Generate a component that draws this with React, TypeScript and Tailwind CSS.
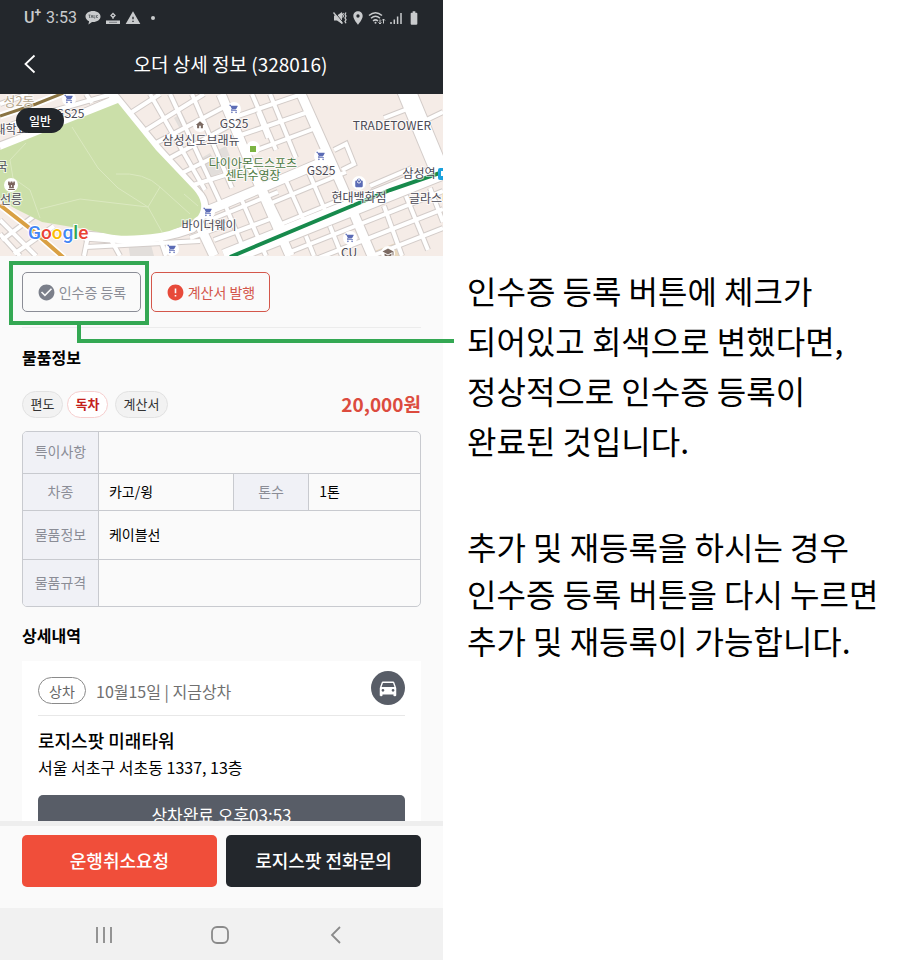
import React from 'react';
import {
  MdBatteryFull,
  MdCheckCircle,
  MdDirectionsCar,
  MdError,
  MdHome,
  MdLocalMall,
  MdLocationOn,
  MdSchool,
  MdShoppingCart,
  MdWarning,
} from 'react-icons/md';
import { FaChessRook } from 'react-icons/fa';

const CARTS = [
  { x: 69, y: 99 },
  { x: 234, y: 109 },
  { x: 321, y: 156 },
  { x: 208, y: 212 },
  { x: 172, y: 249 },
  { x: 350, y: 238 },
];

const LABELS = [
  { x: 70, y: 118, text: 'GS25' },
  { x: 234, y: 128, text: 'GS25' },
  { x: 321, y: 175, text: 'GS25' },
  { x: 349, y: 257, text: 'CU' },
  { x: 392, y: 130, text: 'TRADETOWER' },
  { x: 201, y: 145, text: '삼성신도브래뉴' },
  { x: 359, y: 202, text: '현대백화점' },
  { x: 209, y: 230, text: '바이더웨이' },
  { x: 419, y: 178, text: '삼성역' },
  { x: 431, y: 203, text: '글라스타' },
  { x: 11, y: 134, text: '대학교' },
  { x: 2, y: 171, text: '국' },
  { x: 11, y: 204, text: '선릉' },
];

const NARROW_ROADS = [
  // north west
  'M0 129 L32 117 L112 94',
  'M0 104 L28 94',
  'M86 94 L92 103',
  // north, between the park and the first avenue
  'M132 112 L160 94',
  'M146 130 L204 94',
  'M156 143 L226 106',
  'M170 158 L236 122',
  'M182 173 L212 158',
  'M190 186 L254 166',
  'M150 94 L205 190',
  'M170 94 L220 202',
  'M192 94 L232 188',
  // centre
  'M232 118 L302 94',
  'M238 136 L308 112',
  'M246 154 L316 128',
  'M252 94 L276 150',
  'M270 94 L296 158',
  'M258 112 L268 138',
  // below the cross road
  'M205 222 L278 192',
  'M214 240 L270 219',
  'M190 238 L234 222',
  'M264 206 L346 172',
  'M274 227 L352 195',
  'M240 196 L266 256',
  'M262 184 L288 238',
  'M284 176 L308 230',
  'M306 166 L330 222',
  'M224 202 L244 250',
  // south west
  'M0 220 L36 256',
  'M0 234 L20 256',
  'M2 240 L42 210',
  'M14 254 L54 226',
  'M88 236 L84 256',
  'M86 247 L200 241',
  'M110 238 L120 256',
  'M160 238 L166 256',
  // south east
  'M290 252 L443 191',
  'M316 259 L443 209',
  'M372 256 L443 228',
  'M306 236 L314 256',
  'M330 226 L342 256',
  'M384 206 L402 256',
  'M406 196 L428 250',
  'M430 188 L443 222',
  // east
  'M334 150 L346 144 L354 164 L342 170',
  'M384 118 L410 108',
  'M370 186 L412 168',
  'M418 124 L443 112',
];

const WIDE_ROADS = [
  'M112 94 L158 150 L200 196 Q210 210 192 228 Q160 240 125 239 L84 236',
  'M0 147 L60 124 L118 99',
  'M204 212 L226 203 L332 158',
  'M221 94 L256 178 L290 256',
  'M301 94 L342 186 L372 256',
  'M198 222 L214 256',
];

const StatusBar: React.FC = () => {
  return (
    <div className="flex h-9 items-center justify-between pl-6 pr-[21px] text-[#c9cbcd]">
      <div className="flex items-center">
        <span className="font-['Roboto',sans-serif] text-base font-medium">
          U<sup className="text-xs font-bold">+</sup>
        </span>
        <span className="ml-[5px] font-['Roboto',sans-serif] text-base">3:53</span>
        <svg className="ml-2 h-4 w-4" viewBox="0 0 16 16" fill="currentColor">
          <path d="M8 1c-4.200 0-7.500 2.400-7.500 5.500 0 2.100 1.500 3.900 3.600 4.800L3.400 14.500l3.600-2.500H8c4.200 0 7.500-2.400 7.500-5.500S12.200 1 8 1z" />
          <path d="M3.500 5h2M4.500 5v3M6 8l1-3 1 3M9 5v3h1.200M11.300 5v3M12.800 5l-1.300 1.500 1.300 1.500" fill="none" stroke="#555a5e" strokeWidth="0.8" />
        </svg>
        <svg className="ml-1 h-4 w-4" viewBox="0 0 16 16" fill="none" stroke="currentColor">
          <rect x="1" y="10.500" width="14" height="3.500" fill="currentColor" stroke="none" />
          <path d="M4 12.300h8" stroke="#686c70" strokeWidth="0.8" />
          <path d="M8 3.500l2 2-2 2-2-2z" strokeWidth="1.300" />
          <path d="M8 7.500v1.500" />
        </svg>
        <MdWarning className="ml-1 h-4 w-4" />
        <span className="ml-[10px] h-1 w-1 rounded-full bg-[#c9cbcd]" />
      </div>
      <div className="flex items-center gap-[2px]">
        <svg className="h-4 w-4" viewBox="0 0 16 16" fill="none" stroke="currentColor" strokeWidth="1.300">
          <path d="M2 5.500h3L10 2v12l-5-3.500H2z" fill="currentColor" stroke="none" />
          <path d="M2.500 2l9 11" stroke="#23272c" strokeWidth="1" />
          <path d="M1.500 2.500l9 11" />
          <path d="M11.500 3l-1 1.500 1 1.500-1 1.500M14 2.500l-1 1.800 1 1.800-1 1.800 1 1.800-1 1.800 1 1.800" />
        </svg>
        <MdLocationOn className="h-4 w-4" />
        <svg className="h-4 w-[18px]" viewBox="0 0 18 16" fill="none" stroke="currentColor" strokeWidth="1.500">
          <path d="M1 5.500q6.500-5.500 13 0M3 8.300q4.500-4 9 0M5 11q2.500-2.200 5 0" />
          <circle cx="7.500" cy="12.800" r="1" fill="currentColor" stroke="none" />
          <path d="M12 9.500v4.500m-1.500-1.500l1.500 1.500 1.500-1.500M15.500 13.500V9m-1.500 1.500L15.500 9l1.500 1.500" strokeWidth="1" />
        </svg>
        <svg className="h-4 w-4" viewBox="0 0 16 16" stroke="currentColor" strokeWidth="1.500">
          <path d="M3 12v2M6.300 9.500V14M9.600 6.500V14M13 3v11" />
        </svg>
        <MdBatteryFull className="h-4 w-4" />
      </div>
    </div>
  );
};

const MapView: React.FC = () => {
  return (
    <div className="relative h-[162px] shrink-0 overflow-hidden">
      <svg
        className="h-full w-full font-['Noto_Sans_CJK_KR',sans-serif]"
        viewBox="0 94 443 162"
        preserveAspectRatio="xMidYMid slice"
      >
        <rect x="0" y="94" width="443" height="162" fill="#f5ece7" />
        <g fill="#e2dedb">
          <path d="M128 243 L150 241 L154 256 L130 256z" />
          <path d="M198 160 L210 153 L222 172 L210 178z" />
          <path d="M174 118 L182 113 L188 124 L180 129z" />
          <path d="M218 150 L226 146 L232 162 L224 166z" />
        </g>
        <path d="M372 252 L398 242 L404 256 L372 256z" fill="#ead9bd" />

        <g fill="none" stroke="#d3ccc9">
          {NARROW_ROADS.map((d) => (
            <path key={d} d={d} strokeWidth="6" />
          ))}
          {WIDE_ROADS.map((d) => (
            <path key={d} d={d} strokeWidth="11" />
          ))}
          <path d="M406 90 L440 172" strokeWidth="20" />
          <path d="M225 258 L450 168" strokeWidth="19" />
        </g>
        <g fill="none" stroke="#ffffff">
          {NARROW_ROADS.map((d) => (
            <path key={d} d={d} strokeWidth="4" />
          ))}
          {WIDE_ROADS.map((d) => (
            <path key={d} d={d} strokeWidth="9" />
          ))}
          <path d="M406 90 L440 172" strokeWidth="18" />
          <path d="M225 258 L450 168" strokeWidth="17" />
        </g>

        <path
          d="M0 150 L60 126 L118 103 L156 150 L194 190 Q206 204 198 216 Q180 230 160 233 Q125 238 108 234 L84 229 L42 222 L16 209 L0 200z"
          fill="#cbdfa9"
        />
        <g fill="none" stroke="#dbe9c0" strokeWidth="1">
          <path d="M72 127 L98 168 L118 188 L148 207 L162 232" />
          <path d="M26 143 L10 160 L13 178 L30 190 L40 218" />
          <path d="M40 209 L80 199 L148 207 L160 187" />
          <path d="M116 174 Q145 172 160 187 L190 214" />
          <path d="M184 194 L198 206" />
        </g>

        <path d="M0 205 L32 230 L64 258" fill="none" stroke="#ffffff" strokeWidth="7" />
        <path d="M0 205 L32 230 L64 258" fill="none" stroke="#d9a044" strokeWidth="4" />
        <path d="M0 116 L36 104 L66 92" fill="none" stroke="#ffffff" strokeWidth="7" />
        <path d="M0 116 L36 104 L66 92" fill="none" stroke="#8a7443" strokeWidth="3" />
        <path d="M230 257 L390 190 L443 172" fill="none" stroke="#178a4c" strokeWidth="4" />

        {CARTS.map(({ x, y }) => (
          <g key={`${x}-${y}`}>
            <circle cx={x} cy={y} r="7" fill="#ffffff" />
            <MdShoppingCart x={x - 5} y={y - 5} size={10} color="#5b6bb5" />
          </g>
        ))}
        <circle cx="200" cy="125" r="7" fill="#ffffff" />
        <MdHome x={195} y={120} size={10} color="#7b6a62" />
        <circle cx="11" cy="185" r="7" fill="#ffffff" />
        <FaChessRook x={7} y={181} size={9} color="#7a625c" />
        <circle cx="359" cy="183" r="7" fill="#ffffff" />
        <MdLocalMall x={354} y={178} size={10} color="#5b6bb5" />
        <circle cx="388" cy="253" r="7" fill="#ffffff" />
        <MdSchool x={382} y={247} size={12} color="#7b6a62" />
        <circle cx="253" cy="148" r="7" fill="#ffffff" />
        <rect x="250" y="146" width="6" height="6" fill="#7cb342" />
        <rect x="438" y="168" width="10" height="12" rx="2" fill="#1ba1dc" />
        <path d="M441 171h5v5h-5z" fill="#ffffff" />

        <g fontSize="12" textAnchor="middle" stroke="#ffffff" strokeOpacity="0.7" strokeWidth="2" paintOrder="stroke">
          <text x="19" y="106" fontSize="13" fill="#b5a68c">성2동</text>
          {LABELS.map(({ x, y, text }) => (
            <text key={`${x}-${y}`} x={x} y={y} fill="#4b4a55">{text}</text>
          ))}
          <text x="253" y="168" fill="#4d7a43">다이아몬드스포츠</text>
          <text x="253" y="180" fill="#4d7a43">센터수영장</text>
        </g>
        <text
          x="28"
          y="239"
          fontSize="19"
          fontWeight="500"
          stroke="#ffffff"
          strokeWidth="2"
          paintOrder="stroke"
          className="font-['Roboto',sans-serif]"
        >
          <tspan fill="#4285f4">G</tspan>
          <tspan fill="#ea4335">o</tspan>
          <tspan fill="#fbbc05">o</tspan>
          <tspan fill="#4285f4">g</tspan>
          <tspan fill="#34a853">l</tspan>
          <tspan fill="#ea4335">e</tspan>
        </text>
      </svg>
      <span className="absolute left-4 top-[14px] flex h-[25px] w-12 items-center justify-center rounded-full bg-[#22262b] text-xs font-medium text-white">
        일반
      </span>
    </div>
  );
};

const ReceiptActions: React.FC = () => {
  return (
    <div className="relative mx-[22px] flex h-[72px] shrink-0 items-start gap-[10px] border-b border-[#ececec] pt-4">
      <button type="button" className="flex h-10 w-[119px] items-center justify-center gap-[3px] rounded-[5px] border border-[#8b8d96] text-sm text-[#8b8d96]">
        <MdCheckCircle className="h-[19px] w-[19px] text-[#7b7f8a]" />
        인수증 등록
      </button>
      <button type="button" className="flex h-10 w-[119px] items-center justify-center gap-[3px] rounded-[5px] border border-[#d4574b] text-sm text-[#d4574b]">
        <MdError className="h-[19px] w-[19px] text-[#e74a3a]" />
        계산서 발행
      </button>
      <div className="pointer-events-none absolute -left-[13px] top-[5px] h-16 w-[140px] border-4 border-[#34a853]" />
      <div className="pointer-events-none absolute -right-[33px] left-[55px] top-[69px] h-[18px] border-b-4 border-l-4 border-[#34a853]" />
    </div>
  );
};

const labelCell = 'border-[#c8cacf] bg-[#f0f1f6] pb-[2px] text-center font-normal text-[#8b8d96]';
const valueCell = 'border-[#c8cacf] pb-[2px] pl-[10px] text-left text-black';

const GoodsTable: React.FC = () => {
  return (
    <div className="mt-[13px] overflow-hidden rounded-[5px] border border-[#c8cacf]">
      <table className="w-full table-fixed border-collapse text-sm">
        <colgroup>
          <col className="w-[19%]" />
          <col className="w-[34%]" />
          <col className="w-[19%]" />
          <col className="w-[28%]" />
        </colgroup>
        <tbody>
          <tr className="h-[41px]">
            <th scope="row" className={`${labelCell} border-r`}>특이사항</th>
            <td colSpan={3} className={valueCell} />
          </tr>
          <tr className="h-[37px] border-t border-[#c8cacf]">
            <th scope="row" className={`${labelCell} border-r`}>차종</th>
            <td className={valueCell}>카고/윙</td>
            <th scope="row" className={`${labelCell} border-x`}>톤수</th>
            <td className={valueCell}>1톤</td>
          </tr>
          <tr className="h-[49px] border-t border-[#c8cacf]">
            <th scope="row" className={`${labelCell} border-r`}>물품정보</th>
            <td colSpan={3} className={valueCell}>케이블선</td>
          </tr>
          <tr className="h-[47px] border-t border-[#c8cacf]">
            <th scope="row" className={`${labelCell} border-r`}>물품규격</th>
            <td colSpan={3} className={valueCell} />
          </tr>
        </tbody>
      </table>
    </div>
  );
};

const LoadingCard: React.FC = () => {
  return (
    <div className="mx-[22px] mt-[14px] min-h-0 flex-1 overflow-hidden bg-white px-4 pt-[10px]">
      <div className="flex h-[45px] items-start justify-between border-b border-[#e8e8e8]">
        <div className="flex h-[39px] items-center gap-[10px]">
          <span className="flex h-[27px] w-12 items-center justify-center rounded-full border border-[#8a8a8a] text-sm text-[#666666]">
            상차
          </span>
          <span className="text-base text-[#707070]">10월15일 | 지금상차</span>
        </div>
        <button type="button" aria-label="차량" className="flex h-[34px] w-[34px] items-center justify-center rounded-full bg-[#585d67] text-white">
          <MdDirectionsCar className="h-[22px] w-[22px]" />
        </button>
      </div>
      <p className="mt-[10px] text-lg font-medium leading-7 text-black">로지스팟 미래타워</p>
      <p className="text-base leading-[26px] text-black">서울 서초구 서초동 1337, 13층</p>
      <button type="button" className="mt-[15px] h-11 w-full rounded-[5px] bg-[#585d67] pb-1 text-[17px] text-white">
        상차완료 오후03:53
      </button>
    </div>
  );
};

const Phone: React.FC = () => {
  return (
    <main className="relative flex h-screen min-w-0 flex-col bg-[#fafafa]">
      <header className="h-[94px] shrink-0 bg-[#23272c]">
        <StatusBar />
        <div className="relative flex h-14 items-center justify-center">
          <button type="button" aria-label="뒤로" className="absolute left-[22px] text-white">
            <svg className="h-5 w-4" viewBox="0 0 16 20" fill="none" stroke="currentColor" strokeWidth="1.800">
              <path d="M12.500 1.500L3.500 10l9 8.500" />
            </svg>
          </button>
          <h1 className="pl-[18px] text-[19px] text-white">오더 상세 정보 (328016)</h1>
        </div>
      </header>

      <MapView />
      <ReceiptActions />

      <section className="mx-[22px] shrink-0 pt-[17px]">
        <h2 className="text-base font-bold leading-6 text-black">물품정보</h2>
        <div className="mt-[21px] flex h-7 items-center text-[13px] text-[#333333]">
          <span className="flex h-[27px] w-[41px] items-center justify-center rounded-full border border-[#e2e2e2] bg-[#f2f2f2]">편도</span>
          <span className="ml-1 flex h-[27px] w-[41px] items-center justify-center rounded-full border border-[#f6cfcf] bg-white font-bold text-[#c4201b]">독차</span>
          <span className="ml-[7px] flex h-[27px] w-[53px] items-center justify-center rounded-full border border-[#e2e2e2] bg-[#f2f2f2]">계산서</span>
          <strong className="ml-auto text-[19px] font-bold text-[#dc4b3e]">20,000원</strong>
        </div>
        <GoodsTable />
        <h2 className="mt-4 text-base font-bold leading-6 text-black">상세내역</h2>
      </section>

      <LoadingCard />

      <footer className="shrink-0">
        <div className="flex h-[87px] gap-[9px] border-t-[5px] border-[#eeeeee] px-[22px] pt-[9px]">
          <button type="button" className="h-[52px] flex-1 rounded-[5px] bg-[#f04e3a] pb-[3px] text-lg font-medium text-white">
            운행취소요청
          </button>
          <button type="button" className="h-[52px] flex-1 rounded-[5px] bg-[#23272c] pb-[3px] text-lg font-medium text-white">
            로지스팟 전화문의
          </button>
        </div>
        <nav className="flex h-[52px] items-center justify-center gap-24 bg-[#f1f1f1] pr-[3px] pt-[2px] text-[#8a8a8a]">
          <button type="button" aria-label="최근 앱">
            <svg className="h-5 w-5" viewBox="0 0 20 20" stroke="currentColor" strokeWidth="1.800">
              <path d="M3 2v16M10 2v16M17 2v16" />
            </svg>
          </button>
          <button type="button" aria-label="홈">
            <svg className="h-5 w-5" viewBox="0 0 20 20" fill="none" stroke="currentColor" strokeWidth="1.800">
              <rect x="2" y="2" width="16" height="16" rx="5" />
            </svg>
          </button>
          <button type="button" aria-label="이전">
            <svg className="h-5 w-5" viewBox="0 0 20 20" fill="none" stroke="currentColor" strokeWidth="1.800">
              <path d="M14 2L6 10l8 8" />
            </svg>
          </button>
        </nav>
      </footer>
    </main>
  );
};

const App: React.FC = () => {
  return (
    <div className="grid min-h-screen grid-cols-[443fr_457fr] bg-white font-['Noto_Sans_CJK_KR',sans-serif]">
      <Phone />
      <aside className="whitespace-nowrap pl-6 pt-[265px] text-[32px] text-black">
        <p className="leading-[50px]">
          인수증 등록 버튼에 체크가
          <br />
          되어있고 회색으로 변했다면,
          <br />
          정상적으로 인수증 등록이
          <br />
          완료된 것입니다.
        </p>
        <p className="mt-[58px] leading-[47px]">
          추가 및 재등록을 하시는 경우
          <br />
          인수증 등록 버튼을 다시 누르면
          <br />
          추가 및 재등록이 가능합니다.
        </p>
      </aside>
    </div>
  );
};

export default App;
